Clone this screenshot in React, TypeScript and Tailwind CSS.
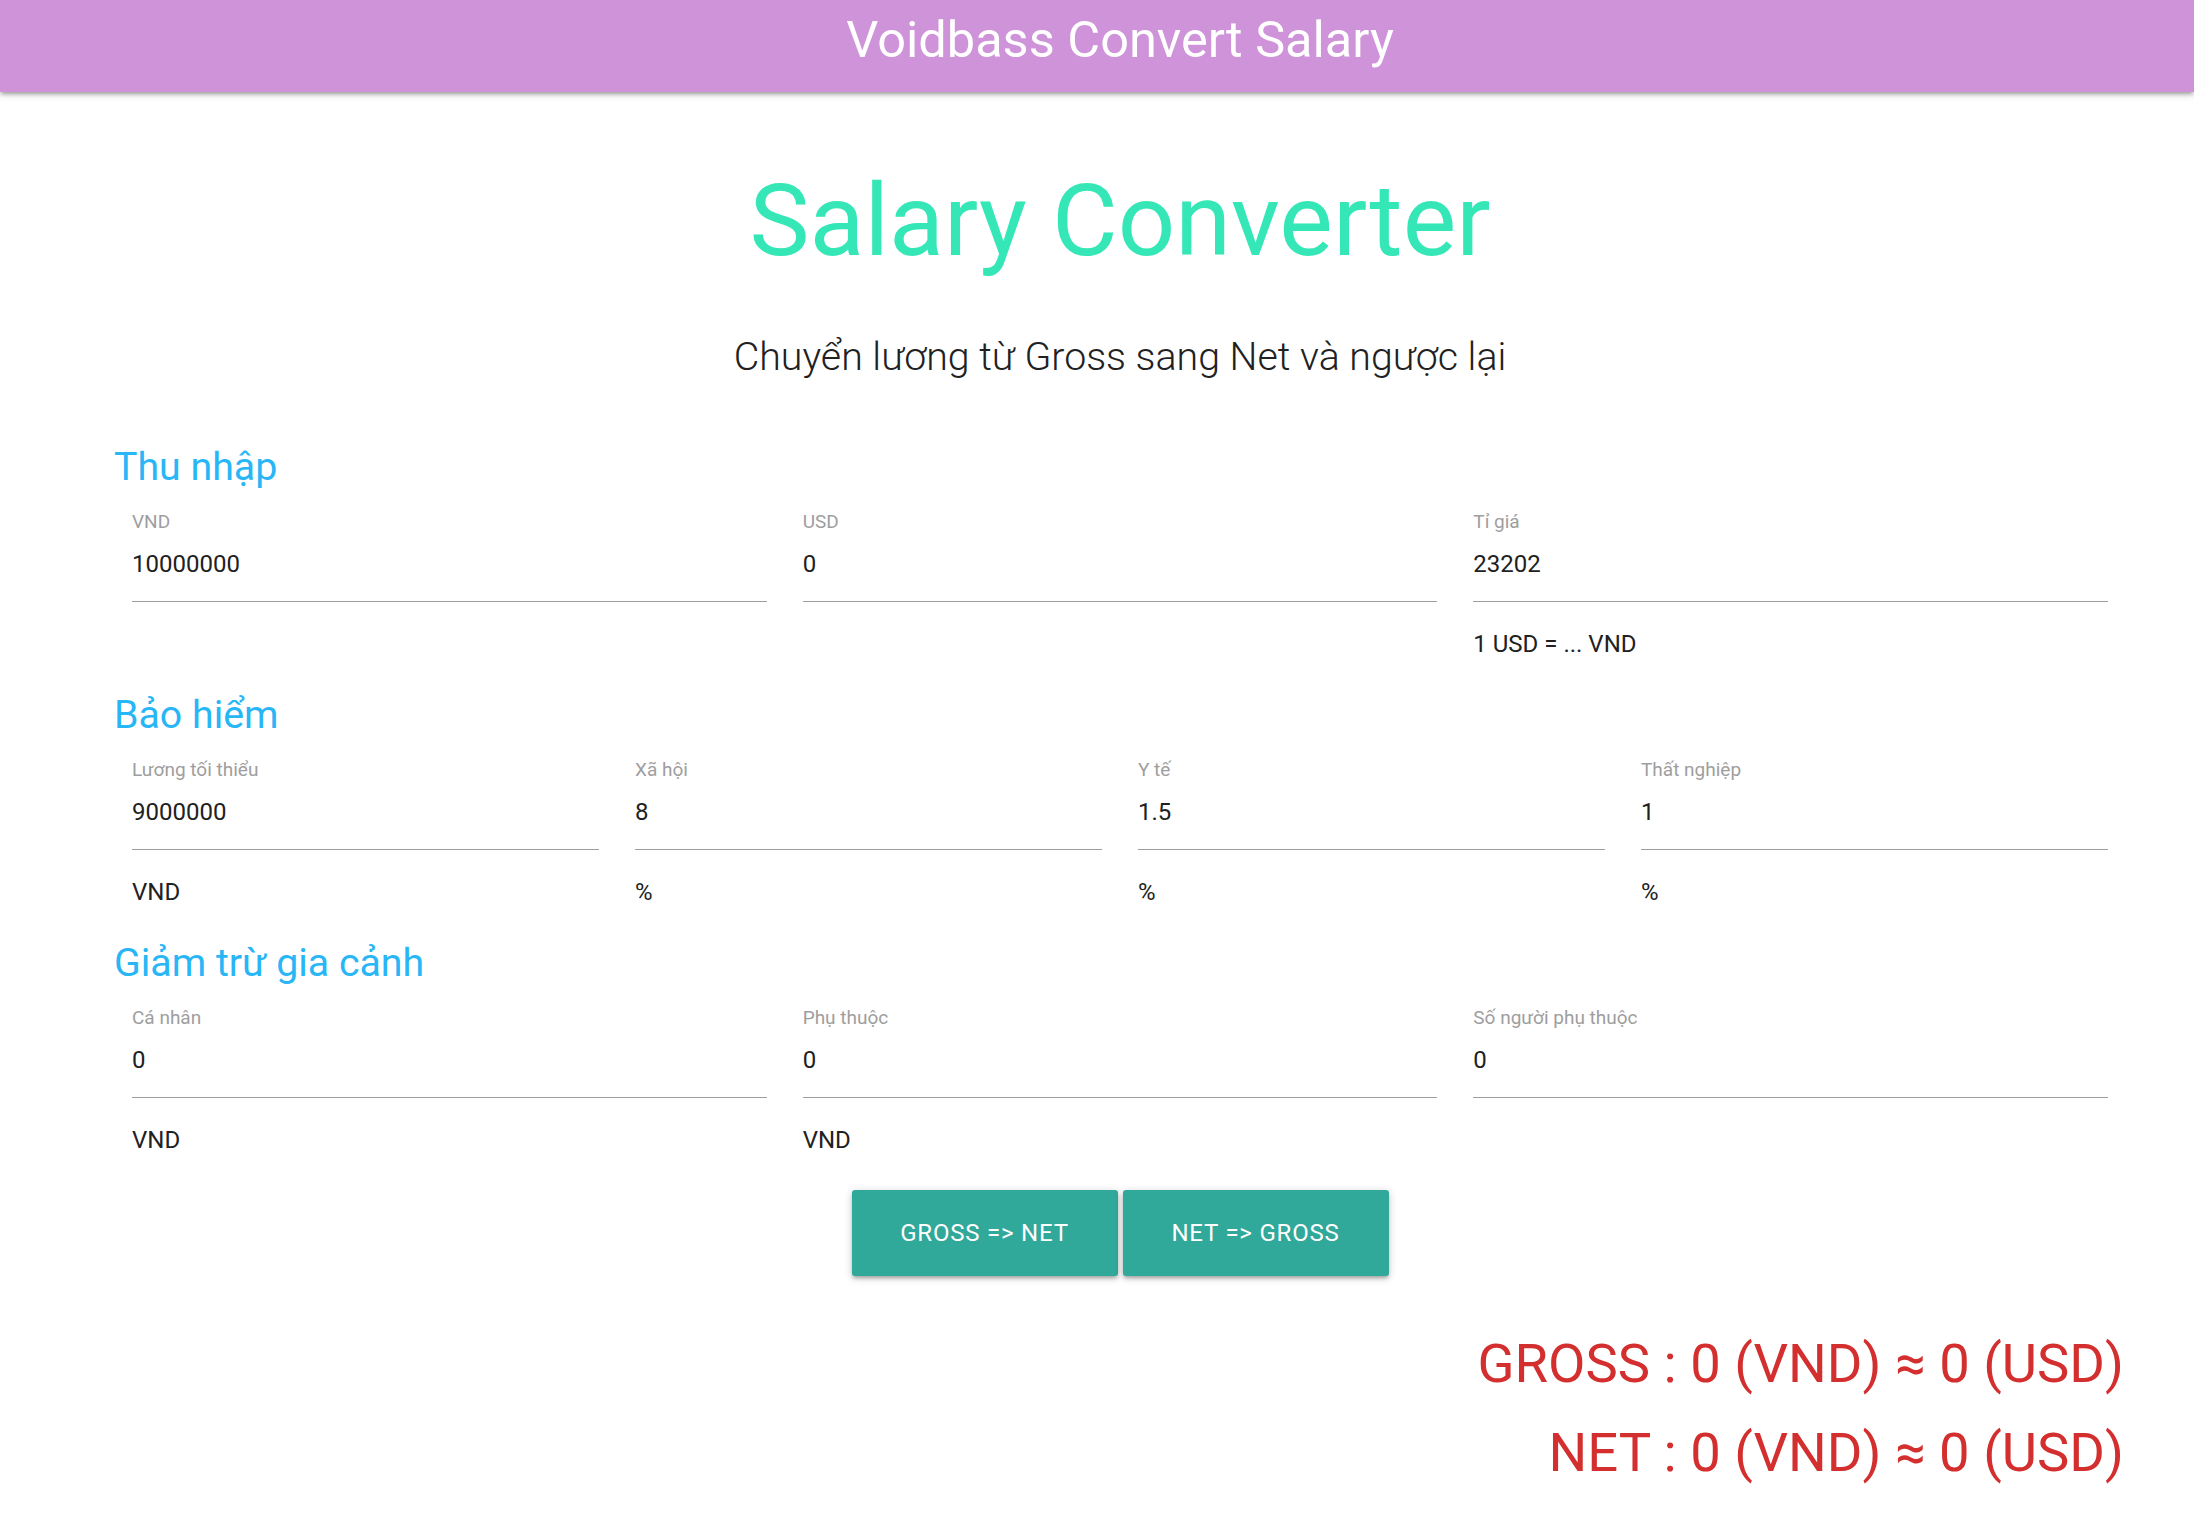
import React from "react";

type FieldProps = { label: string; value: string; unit?: string };

function Field({ label, value, unit }: FieldProps) {
  return (
    <div className="px-[18px]">
      <div className="h-[24px] text-[19px] leading-[24px] text-[#9e9e9e] whitespace-nowrap">{label}</div>
      <div className="pt-[14px] pb-[21px] border-b border-[#9e9e9e]">
        <input
          readOnly
          value={value}
          className="block h-[32px] w-full bg-transparent p-0 text-[24px] leading-[32px] text-[#212121] outline-none"
        />
      </div>
      {unit ? (
        <div className="mt-[26px] h-[32px] text-[24px] leading-[32px] text-[#212121] whitespace-nowrap">{unit}</div>
      ) : null}
    </div>
  );
}

function Heading({ children, className = "" }: { children: React.ReactNode; className?: string }) {
  return (
    <h5 className={`h-[48px] text-[39.3px] leading-[48px] font-normal text-[#29b6f6] ${className}`}>{children}</h5>
  );
}

export default function App() {
  return (
    <div className="min-h-screen w-full overflow-hidden bg-white font-['Roboto','Liberation_Sans',sans-serif]">
      <header className="relative z-10 h-[92px] w-full bg-[#ce93d8] shadow-[0_3px_3px_0_rgba(0,0,0,0.14),0_4px_2px_-3px_rgba(0,0,0,0.12),0_2px_8px_0_rgba(0,0,0,0.2)]">
        <div className="ml-[114px] w-[2012px] text-center text-[50.5px] leading-[80px] text-white whitespace-nowrap">
          Voidbass Convert Salary
        </div>
      </header>

      <main className="ml-[114px] w-[2012px]">
        <h1 className="mt-[74px] h-[110px] text-center text-[101px] leading-[110px] font-normal text-[#35e7b7] whitespace-nowrap">
          Salary Converter
        </h1>
        <p className="mt-[53px] h-[56px] text-center text-[39.3px] leading-[56px] font-light text-[#212121] whitespace-nowrap">
          Chuyển lương từ Gross sang Net và ngược lại
        </p>

        <Heading className="mt-[58px]">Thu nhập</Heading>
        <div className="mt-[19px] grid grid-cols-3">
          <Field label="VND" value="10000000" />
          <Field label="USD" value="0" />
          <Field label="Tỉ giá" value="23202" unit="1 USD = ... VND" />
        </div>

        <Heading className="mt-[31px]">Bảo hiểm</Heading>
        <div className="mt-[19px] grid grid-cols-4">
          <Field label="Lương tối thiểu" value="9000000" unit="VND" />
          <Field label="Xã hội" value="8" unit="%" />
          <Field label="Y tế" value="1.5" unit="%" />
          <Field label="Thất nghiệp" value="1" unit="%" />
        </div>

        <Heading className="mt-[31px]">Giảm trừ gia cảnh</Heading>
        <div className="mt-[19px] grid grid-cols-3">
          <Field label="Cá nhân" value="0" unit="VND" />
          <Field label="Phụ thuộc" value="0" unit="VND" />
          <Field label="Số người phụ thuộc" value="0" />
        </div>

        <div className="mt-[34px] flex justify-center gap-[5px]">
          <button className="h-[86px] w-[266px] rounded-[3px] bg-[#30a89a] text-[24px] uppercase tracking-[0.8px] text-white shadow-[0_3px_3px_0_rgba(0,0,0,0.14),0_4px_2px_-3px_rgba(0,0,0,0.12),0_2px_8px_0_rgba(0,0,0,0.2)]">
            GROSS =&gt; NET
          </button>
          <button className="h-[86px] w-[266px] rounded-[3px] bg-[#30a89a] text-[24px] uppercase tracking-[0.8px] text-white shadow-[0_3px_3px_0_rgba(0,0,0,0.14),0_4px_2px_-3px_rgba(0,0,0,0.12),0_2px_8px_0_rgba(0,0,0,0.2)]">
            NET =&gt; GROSS
          </button>
        </div>

        <div className="mt-[43px] pr-[2px] text-right text-[54.4px] leading-[89px] text-[#d32f2f] whitespace-nowrap">
          <div>GROSS : 0 (VND) ≈ 0 (USD)</div>
          <div>NET : 0 (VND) ≈ 0 (USD)</div>
        </div>
      </main>
    </div>
  );
}
